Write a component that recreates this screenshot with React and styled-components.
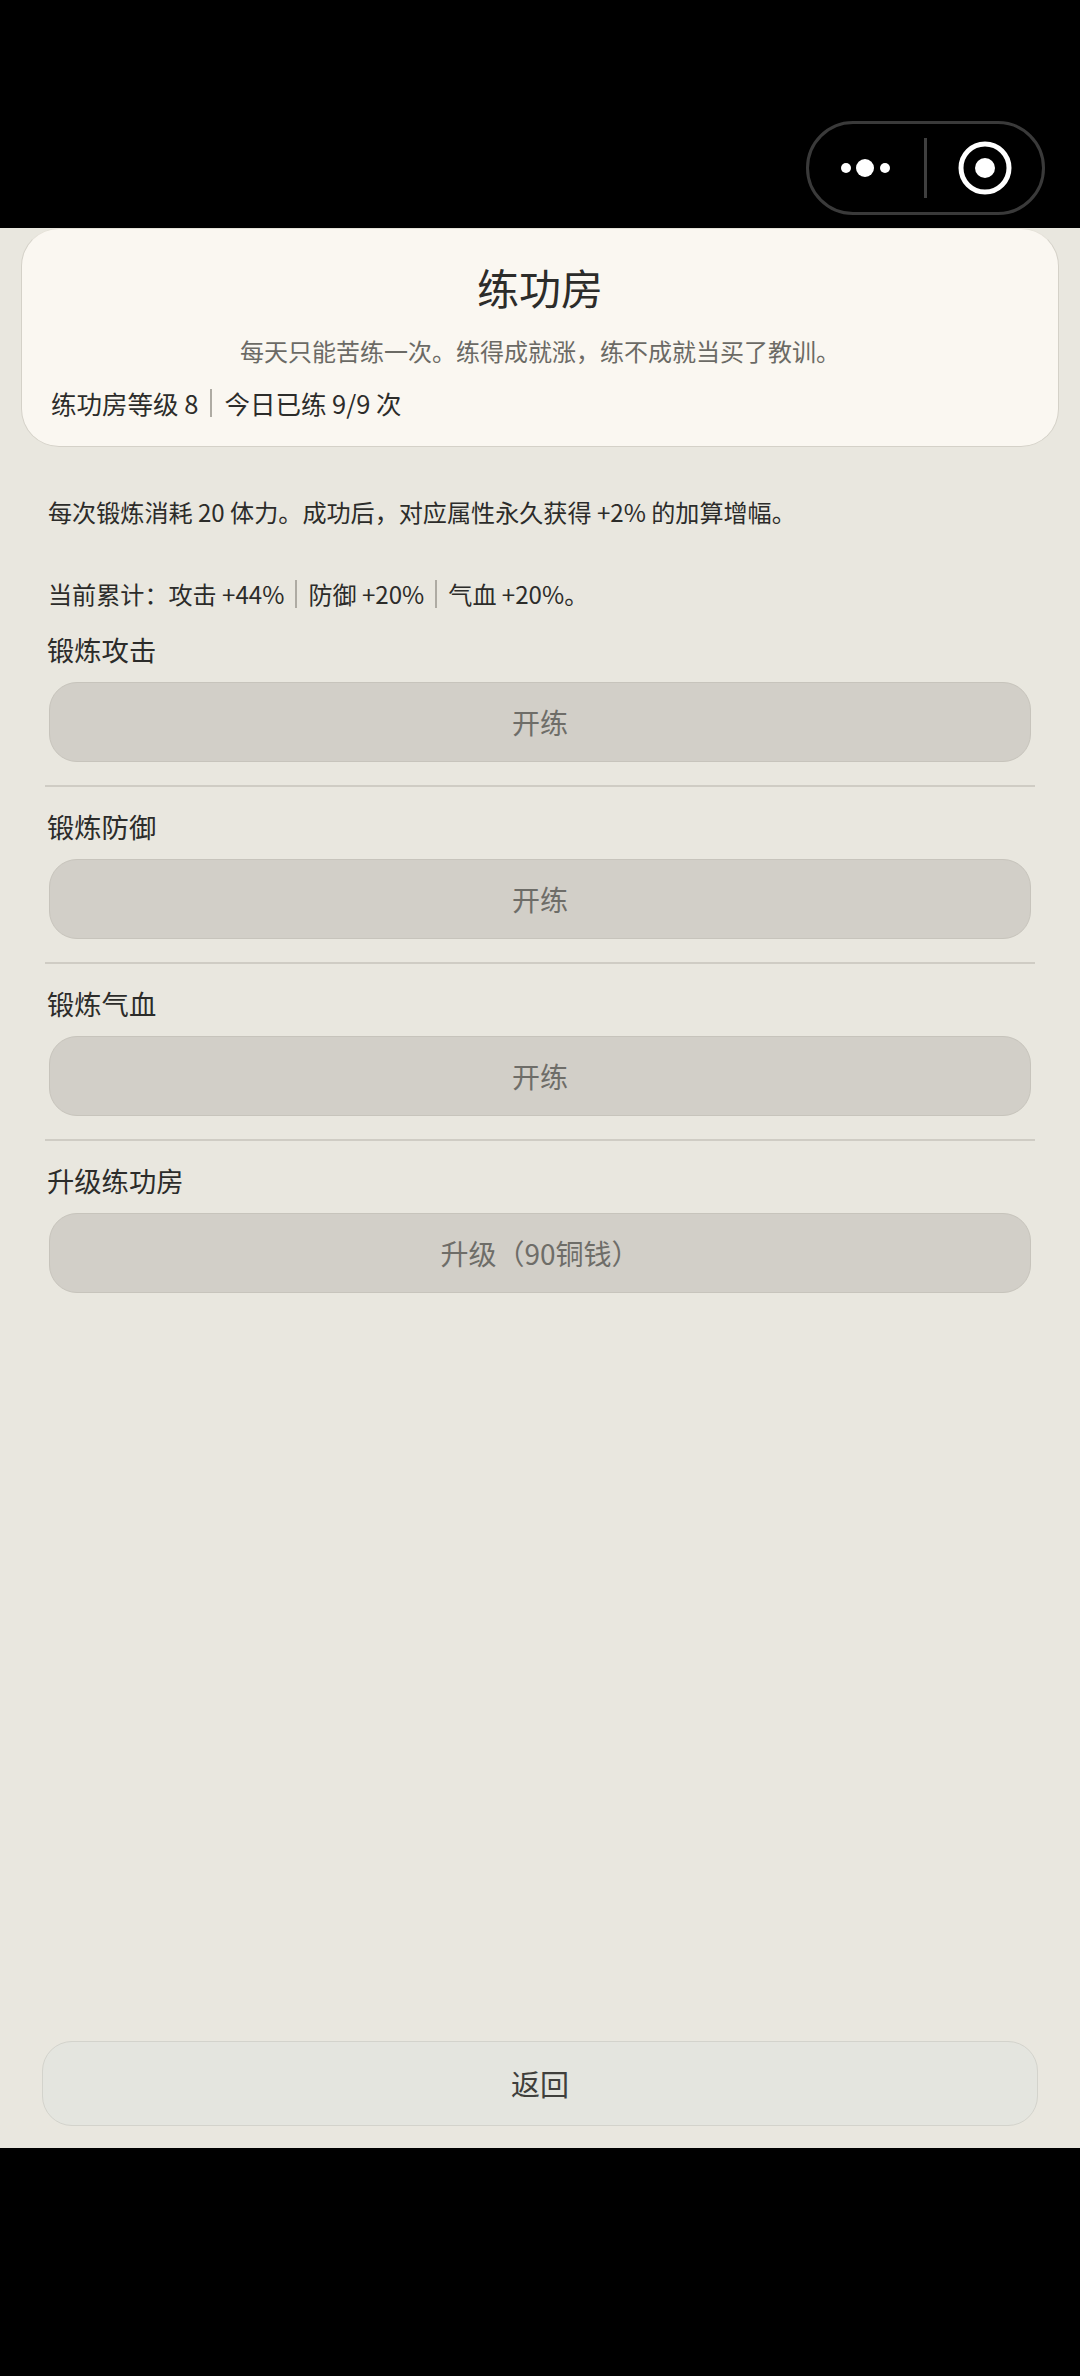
import React from "react";
import styled, { createGlobalStyle } from "styled-components";

const Global = createGlobalStyle`
  html, body { margin: 0; padding: 0; background: #000; }
  body { font-family: "Noto Sans CJK SC", "Noto Sans", sans-serif; }
`;
const Screen = styled.div`
  width: 1080px; height: 2376px; background: #000;
  display: flex; flex-direction: column;
`;
const TopBar = styled.header`
  height: 228px; box-sizing: border-box; padding: 121px 35px 0 0;
  display: flex; justify-content: flex-end; align-items: flex-start;
`;
const Capsule = styled.div`
  width: 239px; height: 94px; box-sizing: border-box;
  border: 3px solid #3a3a3a; border-radius: 47px;
  display: grid; grid-template-columns: 1fr 3px 1fr; align-items: center;
`;
const CapsuleSlot = styled.div`
  display: flex; justify-content: center; align-items: center;
`;
const CapsuleDivider = styled.div`
  width: 3px; height: 60px; background: #3f3f3f;
`;
const Main = styled.main`
  height: 1920px; background: #e9e7df; display: flex; flex-direction: column;
`;
const HeaderCard = styled.section`
  margin: 0 21px; height: 219px; box-sizing: border-box;
  background: #faf7f1; border: 1.5px solid #d4d1c8; border-top-color: #e4e1d8;
  border-radius: 38px; padding: 26px 29px 0;
`;
const Title = styled.h1`
  margin: 0; text-align: center; color: #2c2c2a;
  font-size: 42px; font-weight: 400; line-height: 64px;
`;
const Subtitle = styled.p`
  margin: 14px 0 0; text-align: center; color: #6b6a65;
  font-size: 24px; line-height: 36px;
`;
const Stats = styled.div`
  margin-top: 16px; display: flex; align-items: center;
  color: #2c2c2a; font-size: 25.5px; line-height: 36px;
`;
const Sep = styled.span`
  display: inline-block; width: 2px; height: 28px; background: #aeaba3;
  margin: 0 ${p => p.$gap}px;
`;
const Notes = styled.div`
  margin: 44px 0 0; padding: 0 48px; color: #2c2c2a;
  font-size: 24.1px; line-height: 41px;
`;
const NoteLine = styled.p`
  margin: 0 0 ${p => (p.$spaced ? 41 : 0)}px; display: flex; align-items: center; white-space: pre;
`;
const Actions = styled.div`
  margin-top: 15px; padding: 0 45px; display: flex; flex-direction: column;
`;
const Action = styled.div`
  padding-bottom: ${p => (p.$last ? 0 : 23)}px;
  margin-bottom: ${p => (p.$last ? 0 : 19)}px;
  border-bottom: ${p => (p.$last ? "none" : "2px solid #cfccc4")};
`;
const ActionLabel = styled.div`
  padding-left: 2px; color: #2c2c2a; font-size: 27.3px; line-height: 40px;
`;
const ActionButton = styled.button`
  display: block; box-sizing: border-box; width: 982px; height: 80px; margin: 13px 0 0 4px;
  background: #d2cfc8; border: 1.5px solid #c7c4bc; border-radius: 28px;
  color: #6e6d68; font: inherit; font-size: 28px; line-height: 1;
`;
const Spacer = styled.div`flex: 1;`;
const BackButton = styled.button`
  display: block; box-sizing: border-box; width: 996px; height: 85px; margin: 0 0 22px 42px;
  background: #e4e5df; border: 1.5px solid #d3d3cc; border-radius: 30px;
  color: #3f3f3c; font: inherit; font-size: 29px; line-height: 1;
`;

const Dots = () => (
  <svg width="60" height="24" viewBox="0 0 60 24">
    <circle cx="9" cy="12" r="5" fill="#fff" />
    <circle cx="28" cy="12" r="9" fill="#fff" />
    <circle cx="48" cy="12" r="5" fill="#fff" />
  </svg>
);
const Ring = () => (
  <svg width="54" height="54" viewBox="0 0 54 54">
    <circle cx="27" cy="27" r="24" fill="none" stroke="#fff" strokeWidth="5" />
    <circle cx="27" cy="27" r="10" fill="#fff" />
  </svg>
);

const actions = [
  ["锻炼攻击", "开练"],
  ["锻炼防御", "开练"],
  ["锻炼气血", "开练"],
  ["升级练功房", "升级（90铜钱）"],
];

export default function App() {
  return (
    <Screen>
      <Global />
      <TopBar>
        <Capsule>
          <CapsuleSlot><Dots /></CapsuleSlot>
          <CapsuleDivider />
          <CapsuleSlot><Ring /></CapsuleSlot>
        </Capsule>
      </TopBar>
      <Main>
        <HeaderCard>
          <Title>练功房</Title>
          <Subtitle>每天只能苦练一次。练得成就涨，练不成就当买了教训。</Subtitle>
          <Stats>练功房等级 8<Sep $gap={12} />今日已练 9/9 次</Stats>
        </HeaderCard>
        <Notes>
          <NoteLine $spaced>每次锻炼消耗 20 体力。成功后，对应属性永久获得 +2% 的加算增幅。</NoteLine>
          <NoteLine>当前累计：攻击 +44%<Sep $gap={11} />防御 +20%<Sep $gap={11} />气血 +20%。</NoteLine>
        </Notes>
        <Actions>
          {actions.map(([label, text], i) => (
            <Action key={label} $last={i === actions.length - 1}>
              <ActionLabel>{label}</ActionLabel>
              <ActionButton disabled>{text}</ActionButton>
            </Action>
          ))}
        </Actions>
        <Spacer />
        <BackButton>返回</BackButton>
      </Main>
    </Screen>
  );
}
